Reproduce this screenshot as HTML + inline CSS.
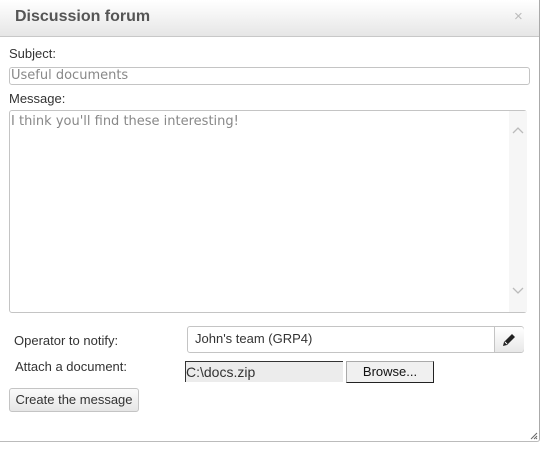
<!DOCTYPE html>
<html><head><style>
body{margin:0;width:560px;height:472px;background:#fff;font-family:"Liberation Sans",sans-serif;font-size:13px;color:#333;position:relative;overflow:hidden}
.a{position:absolute}
.dlg{left:0;top:0;width:539px;height:441px;border-right:1px solid #aaa;border-bottom:1px solid #bbb;border-bottom-right-radius:3px}
.hd{left:0;top:0;width:539px;height:36px;background:linear-gradient(#fff,#e6e6e6);border-bottom:1px solid #c8c8c8}
.inp{border:1px solid #c4c4c4;border-radius:3px;background:#fff}
.mono{font-family:"DejaVu Sans",sans-serif;color:#888;font-size:13px}
</style></head><body>
<div class="a dlg"></div>
<div class="a hd"></div>
<div class="a" style="left:15px;top:8px;font-size:16px;font-weight:bold;color:#555">Discussion forum</div>
<div class="a" style="left:514px;top:8px;font-size:15px;color:#bbb">×</div>
<div class="a" style="left:9px;top:46px">Subject:</div>
<div class="a inp mono" style="left:9px;top:67px;width:518px;height:16px;line-height:16px;padding-left:1px">Useful documents</div>
<div class="a" style="left:9px;top:91px">Message:</div>
<div class="a inp mono" style="left:9px;top:110px;width:518px;height:203px;padding-left:1px;line-height:16px;padding-top:3px;box-sizing:border-box">I think you'll find these interesting!</div>
<div class="a" style="left:509px;top:111px;width:18px;height:201px;background:#f6f6f6"></div>
<svg class="a" style="left:512px;top:126px" width="12" height="10"><path d="M1 7l5-5 5 5" stroke="#bbb" fill="none" stroke-width="1.3"/></svg>
<svg class="a" style="left:512px;top:286px" width="12" height="10"><path d="M1 2l5 5 5-5" stroke="#bbb" fill="none" stroke-width="1.3"/></svg>
<div class="a" style="left:14px;top:333px">Operator to notify:</div>
<div class="a inp" style="left:187px;top:326px;width:337px;height:27px;box-sizing:border-box;padding:4px 7px">John's team (GRP4)</div>
<div class="a" style="left:494px;top:327px;width:29px;height:25px;border-left:1px solid #c4c4c4;background:linear-gradient(#fff,#e8e8e8);border-radius:0 3px 3px 0"></div>
<svg class="a" style="left:502px;top:333px" width="14" height="14" viewBox="0 0 14 14"><path d="M10 1l3 3-8 8-4 1 1-4z" fill="#222"/><path d="M3 9l2 2" stroke="#fff" stroke-width="1"/></svg>
<div class="a" style="left:15px;top:359px">Attach a document:</div>
<div class="a" style="left:185px;top:361px;width:158px;height:21px;border-top:1px solid #333;border-left:1px solid #333;background:#ececec;box-sizing:border-box;font-size:14px;line-height:20px;color:#333">C:\docs.zip</div>
<div class="a" style="left:346px;top:361px;width:88px;height:22px;box-sizing:border-box;border:1px solid #aaa;border-right-color:#222;border-bottom-color:#222;background:#f0f0f0;text-align:center;line-height:20px;font-size:13px;color:#111">Browse...</div>
<div class="a" style="left:9px;top:388px;width:130px;height:24px;box-sizing:border-box;border:1px solid #c4c4c4;border-radius:3px;background:linear-gradient(#fafafa,#e6e6e6);text-align:center;line-height:22px">Create the message</div>
<svg class="a" style="left:530px;top:432px" width="8" height="8"><path d="M7 1L1 7M7 4L4 7M7 6L6 7" stroke="#666"/></svg>
</body></html>
